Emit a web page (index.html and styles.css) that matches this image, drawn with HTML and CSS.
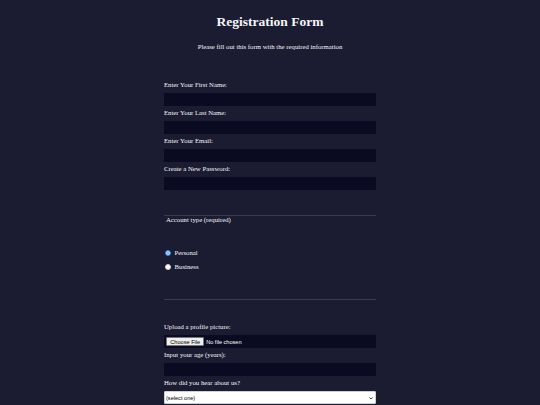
FILE: index.html
```html
<!DOCTYPE html>
<html lang="en">
<head>
<meta charset="utf-8">
<title>Registration Form</title>
<link rel="stylesheet" href="styles.css">
</head>
<body>
<h1>Registration Form</h1>
<p class="intro">Please fill out this form with the required information</p>
<form class="reg-form">
  <fieldset class="group group-names">
    <label class="field-label">Enter Your First Name: <input class="field" type="text"></label>
    <label class="field-label">Enter Your Last Name: <input class="field" type="text"></label>
    <label class="field-label">Enter Your Email: <input class="field" type="email"></label>
    <label class="field-label">Create a New Password: <input class="field" type="password"></label>
  </fieldset>
  <fieldset class="group group-account">
    <legend class="group-legend">Account type (required)</legend>
    <label class="choice"><input class="radio" type="radio" name="account" checked>Personal</label>
    <label class="choice"><input class="radio" type="radio" name="account">Business</label>
  </fieldset>
  <fieldset class="group group-last">
    <label class="field-label">Upload a profile picture: <input class="field file" type="file"></label>
    <label class="field-label">Input your age (years): <input class="field" type="number"></label>
    <label class="field-label">How did you hear about us?
      <span class="select-wrap">
        <select class="select">
          <option>(select one)</option>
          <option>freeCodeCamp News</option>
          <option>freeCodeCamp YouTube Channel</option>
          <option>freeCodeCamp Forum</option>
          <option>Other</option>
        </select>
        <svg class="chevron" viewBox="0 0 8 5" width="4" height="2.6" aria-hidden="true"><path d="M0.8 0.8 L4 4 L7.2 0.8" fill="none" stroke="#111" stroke-width="1.6"/></svg>
      </span>
    </label>
  </fieldset>
</form>
</body>
</html>
```

FILE: styles.css
```css
html {
  background: #1b1b32;
}

body {
  margin: 0;
  height: 100vh;
  overflow: hidden;
  background: #1b1b32;
  color: #f5f6f7;
  font-family: "Liberation Serif", "Times New Roman", serif;
  font-size: 6.75px;
  line-height: 8px;
}

h1 {
  font-size: 13.5px;
  line-height: 15.5px;
  margin: 13.5px auto;
  text-align: center;
}

.intro {
  margin: 6.75px auto;
  line-height: 7.8px;
  text-align: center;
}

.reg-form {
  width: 212px;
  margin: 0 auto;
}

.group {
  margin: 0;
  padding: 0;
  border: none;
  border-bottom: 1.3px solid #3b3b4f;
  min-width: 0;
}

.group-names {
  padding: 21px 0 21.5px;
}

.group-account {
  padding: 21px 0 23px;
}

.group-last {
  padding: 20.7px 0 0;
  border-bottom: none;
}

.group-legend {
  padding: 0 2px;
}

.field-label {
  display: block;
  margin: 3px 0;
}

.field {
  display: block;
  box-sizing: border-box;
  width: 100%;
  height: 13px;
  margin: 4px 0 0;
  padding: 0 1px;
  background: #0a0a23;
  border: 1px solid #0a0a23;
  color: #ffffff;
  font-family: "Liberation Sans", Arial, sans-serif;
  font-size: 5.6px;
}

.file {
  padding: 1px 1px;
}

.file::file-selector-button {
  height: 100%;
  margin: 0 1.7px 0 0;
  padding: 0 3.3px;
  background: #efefef;
  color: #000000;
  border: 1px solid #767676;
  border-radius: 1px;
  font-family: "Liberation Sans", Arial, sans-serif;
  font-size: 5.6px;
}

.select-wrap {
  display: block;
  position: relative;
  margin: 4px 0 0;
}

.select {
  display: block;
  box-sizing: border-box;
  width: 100%;
  height: 13px;
  margin: 0;
  padding: 0 1px;
  appearance: none;
  -webkit-appearance: none;
  background: #ffffff;
  color: #000000;
  border: 1px solid #cfcfd6;
  border-radius: 1px;
  font-family: "Liberation Sans", Arial, sans-serif;
  font-size: 5.6px;
}

.chevron {
  position: absolute;
  right: 3px;
  top: 5.4px;
}

.choice {
  display: flex;
  align-items: center;
  min-height: 11px;
  margin: 3px 0;
}

.radio {
  appearance: none;
  -webkit-appearance: none;
  box-sizing: border-box;
  width: 6px;
  height: 6px;
  margin: 0 3.5px 0 1px;
  border-radius: 50%;
  background: #ffffff;
  border: 0.6px solid #d0d0d8;
}

.radio:checked {
  background: #7fb3f5;
  border: 1.4px solid #2e7be6;
  box-shadow: inset 0 0 0 0.6px #ffffff;
}
```
